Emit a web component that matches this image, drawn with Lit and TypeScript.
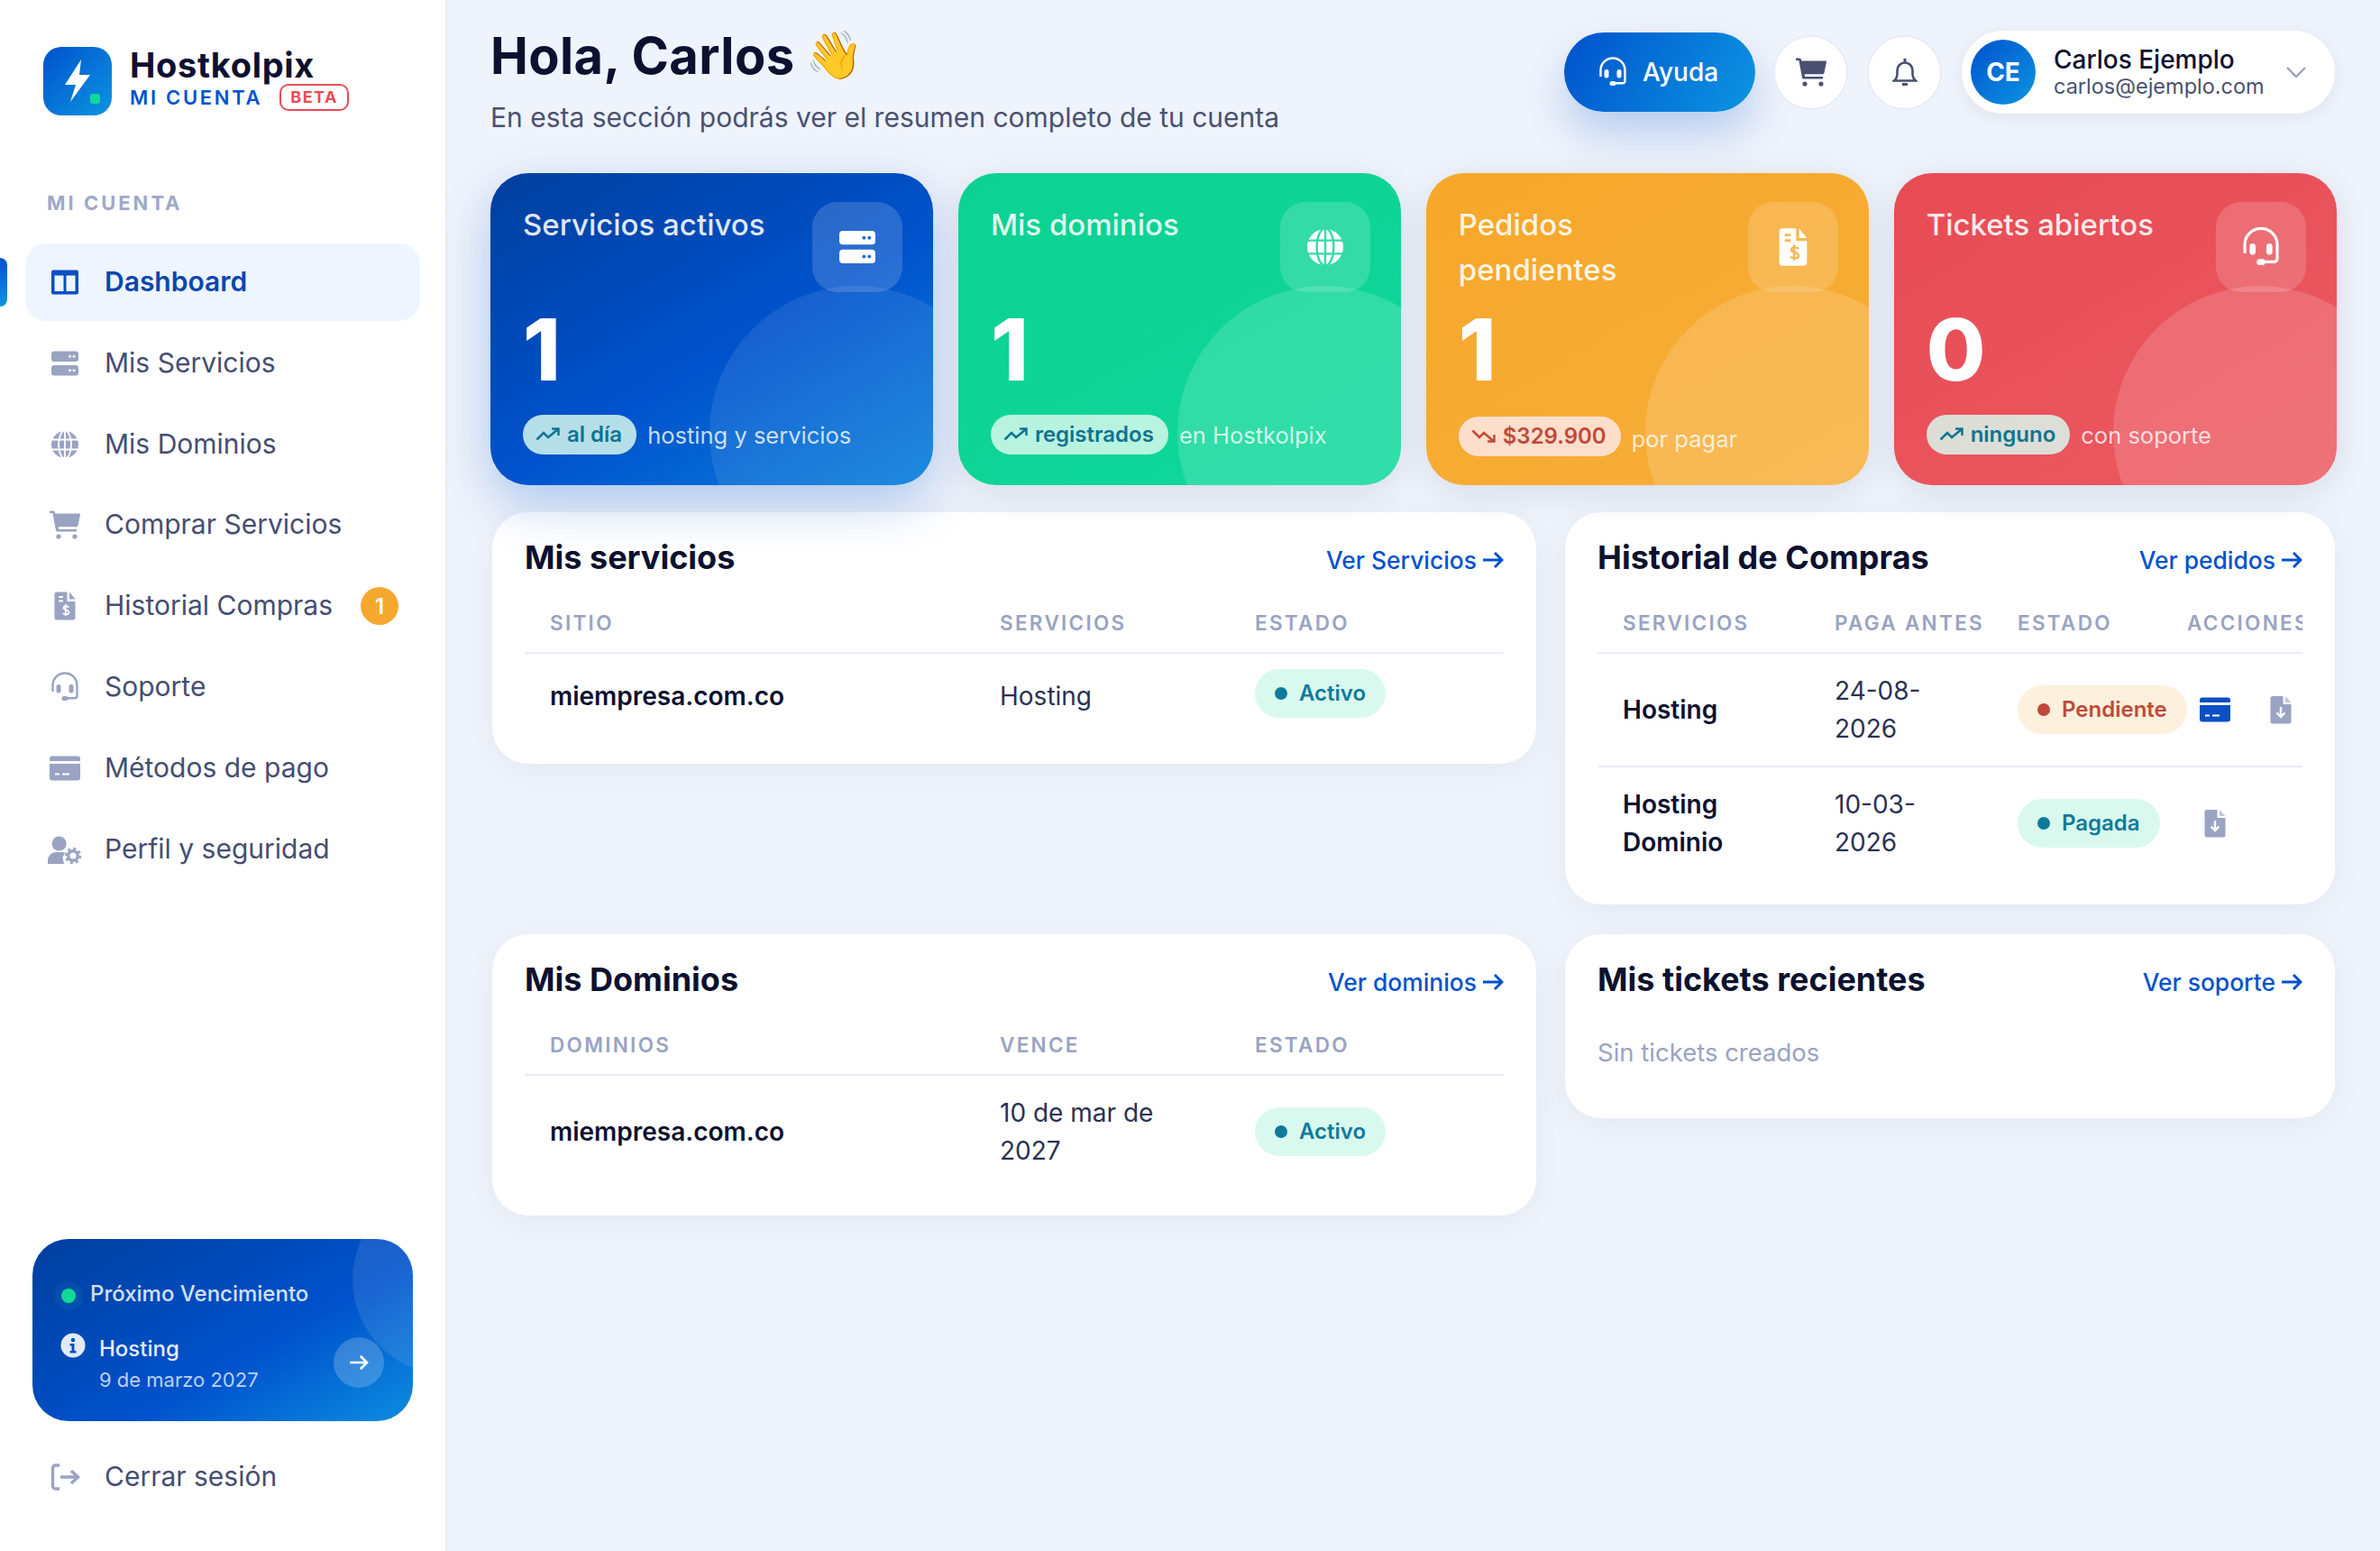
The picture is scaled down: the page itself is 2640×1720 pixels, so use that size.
import { LitElement, html, css, svg } from "lit";
import { customElement } from "lit/decorators.js";

const I: Record<string, any> = {
  dash: svg`<path fill-rule="evenodd" d="M5 4.500h26a2 2 0 0 1 2 2v23a2 2 0 0 1-2 2H5a2 2 0 0 1-2-2v-23a2 2 0 0 1 2-2zM6.500 10.500v17.500h10V10.500zM19.500 10.500v17.500h10V10.500z"/>`,
  server: svg`<path fill-rule="evenodd" d="M6 4.500h24a3 3 0 0 1 3 3v5.500a3 3 0 0 1-3 3H6a3 3 0 0 1-3-3V7.500a3 3 0 0 1 3-3zM6 20h24a3 3 0 0 1 3 3v5.500a3 3 0 0 1-3 3H6a3 3 0 0 1-3-3V23a3 3 0 0 1 3-3zM23.500 8.800a1.500 1.500 0 1 0 .01 0zM28 8.800a1.500 1.500 0 1 0 .01 0zM23.500 24.300a1.500 1.500 0 1 0 .01 0zM28 24.300a1.500 1.500 0 1 0 .01 0z"/>`,
  globe: svg`<mask id="mg"><rect width="36" height="36" fill="#fff"/><g fill="none" stroke="#000" stroke-width="1.800"><ellipse cx="18" cy="18" rx="7" ry="15.500"/><path d="M18 1v34M1 12.500h34M1 23.500h34"/></g></mask><circle cx="18" cy="18" r="15" mask="url(#mg)"/>`,
  cart: svg`<path d="M1 2.500h4a2 2 0 0 1 2 1.500l.3 1.500H34a1 1 0 0 1 1 1.200l-2.500 12a2 2 0 0 1-2 1.600H10.600l.5 2.700H31v2.600H9.500a1.500 1.500 0 0 1-1.400-1.200L4.400 5H1z"/><circle cx="11" cy="31" r="2.600"/><circle cx="29" cy="31" r="2.600"/>`,
  doc: svg`<mask id="md"><rect width="36" height="36" fill="#fff"/><g fill="none" stroke="#000" stroke-width="2"><path d="M11 8h5M11 12.500h5"/><path d="M22.500 19.500c-1-1.500-5.500-2-6 .5-.5 3 6.500 2 6 5.500-.5 2.500-5.500 2-6.500.5M18.800 16v13" stroke-width="1.800"/></g></mask><path mask="url(#md)" d="M9 2.500h11.500v10.500h9V31a2.500 2.500 0 0 1-2.500 2.500H9A2.500 2.500 0 0 1 6.500 31V5A2.500 2.500 0 0 1 9 2.500z"/><path d="M23 2.500l6.500 8H23z"/>`,
  docdown: svg`<mask id="mdd"><rect width="36" height="36" fill="#fff"/><path d="M18 15v11M13.500 21.500l4.500 4.500 4.500-4.500" fill="none" stroke="#000" stroke-width="2.400"/></mask><path mask="url(#mdd)" d="M9 3h11.500v9h9V31a2.500 2.500 0 0 1-2.500 2.500H9A2.500 2.500 0 0 1 6.500 31V5.500A2.500 2.500 0 0 1 9 3z"/><path d="M23 3l6.500 7H23z" opacity=".6"/>`,
  headset: svg`<path d="M4.500 23v-7a13.500 13.500 0 0 1 27 0v11.500a2.800 2.800 0 0 1-2.800 2.800H20" fill="none" stroke="currentColor" stroke-width="2.400"/><rect x="8.500" y="15" width="5" height="9.500" rx="2.500"/><rect x="22.500" y="15" width="5" height="9.500" rx="2.500"/><rect x="14.500" y="28" width="7" height="5" rx="2.500"/>`,
  card: svg`<path fill-rule="evenodd" d="M4 4.500h28a3 3 0 0 1 3 3V10H1V7.500a3 3 0 0 1 3-3zM1 13h34v15.500a3 3 0 0 1-3 3H4a3 3 0 0 1-3-3zM7 23.500v2h5v-2zM15 23.500v2h8v-2z"/>`,
  user: svg`<circle cx="11.600" cy="11.500" r="8"/><path d="M-1 34v-4a9 9 0 0 1 9-9h7.500a9 9 0 0 1 2.500.4L15.500 27l1.500 7z"/><circle cx="27" cy="25" r="5.300" fill="none" stroke="currentColor" stroke-width="3.400"/><circle cx="27" cy="25" r="8" fill="none" stroke="currentColor" stroke-width="2.400" stroke-dasharray="3.200 3.080"/>`,
  logout: svg`<path d="M12 5H7.500a3 3 0 0 0-3 3v20a3 3 0 0 0 3 3H12" fill="none" stroke="currentColor" stroke-width="3.400"/><path d="M13 18h19M25 11l7.500 7-7.500 7" fill="none" stroke="currentColor" stroke-width="3.400"/>`,
};
const ic = (n: string) => html`<svg class="ic" viewBox="0 0 36 36" fill="currentColor">${I[n]}</svg>`;
const trend = (down = false) => html`<svg class="trend" viewBox="0 0 27 15" fill="none" stroke="currentColor" stroke-width="2.500">
  ${down ? svg`<path d="M1.500 1.500L9 9l5-5 11 9.500M18 13.500h7.500V6"/>` : svg`<path d="M1.500 13.500L9 6l5 5L25 2M18 1.500h7.500V9"/>`}</svg>`;
const arrow = html`<svg class="arr" viewBox="0 0 24 20" fill="none" stroke="currentColor" stroke-width="3"><path d="M1 10h21M14 2l8 8-8 8"/></svg>`;

const nav = [
  ["dash", "Dashboard"], ["server", "Mis Servicios"], ["globe", "Mis Dominios"], ["cart", "Comprar Servicios"],
  ["doc", "Historial Compras"], ["headset", "Soporte"], ["card", "Métodos de pago"], ["user", "Perfil y seguridad"],
];
const stats = [
  { c: "blue", t: "Servicios activos", i: "server", n: "1", p: "al día", s: "hosting y servicios" },
  { c: "green", t: "Mis dominios", i: "globe", n: "1", p: "registrados", s: "en Hostkolpix" },
  { c: "orange", t: "Pedidos pendientes", i: "doc", n: "1", p: "$329.900", s: "por pagar", d: true },
  { c: "red", t: "Tickets abiertos", i: "headset", n: "0", p: "ninguno", s: "con soporte" },
];

@customElement("app-root")
export class AppRoot extends LitElement {
  static styles = css`
    :host { display: flex; width: 2640px; height: 1720px; overflow: hidden; background: #eff3fb; font-family: Inter, "Liberation Sans", sans-serif; color: #0c1130; }
    * { box-sizing: border-box; }
    .ic { width: 36px; height: 36px; overflow: visible; flex: none; display: block; }
    .trend { width: 27px; height: 15px; flex: none; }
    .arr { width: 24px; height: 20px; flex: none; }
    aside { width: 496px; height: 1720px; background: #fff; border-right: 2px solid #e8ecf7; flex: none; display: flex; flex-direction: column; position: relative; }
    .brand { display: flex; padding: 52px 0 0 48px; gap: 20px; }
    .logo { width: 76px; height: 76px; border-radius: 20px; background: linear-gradient(135deg, #0052cc, #0c95e2); position: relative; flex: none; display: flex; align-items: center; justify-content: center; }
    .logo svg { width: 30px; height: 48px; }
    .logo i { position: absolute; right: 13px; bottom: 13px; width: 11px; height: 11px; border-radius: 3px; background: #10d996; }
    .bname { font-size: 38px; line-height: 40px; font-weight: 700; letter-spacing: .7px; margin-top: 0; color: #0c1130; }
    .bsub { display: flex; align-items: center; margin-top: 0; gap: 19px; height: 32px; }
    .bsub span { font-size: 22px; font-weight: 600; letter-spacing: 2.700px; color: #0052cc; }
    .bsub b { font-size: 18px; font-weight: 700; letter-spacing: 1.500px; color: #e84c55; border: 2px solid #e84c55; border-radius: 10px; padding: 0 10px; height: 30px; line-height: 26px; }
    .sec { font-size: 22px; line-height: 28px; font-weight: 700; letter-spacing: 3px; color: #a0a8c8; margin: 83px 0 31px 52px; }
    nav { display: flex; flex-direction: column; gap: 3.800px; flex: 1; }
    .it { margin: 0 28px; height: 86px; flex: none; border-radius: 24px; display: flex; align-items: center; padding: 0 0 2px 26px; gap: 26px; color: #9aa3c2; position: relative; }
    .it .ic { margin-top: 2px; }
    .it span { color: #454d72; font-size: 30px; font-weight: 400; }
    .it.on { background: #eef5ff; color: #0a4fc4; }
    .it.on span { color: #0a47ae; font-weight: 600; }
    .it.on::before { content: ""; position: absolute; left: -28px; top: 16px; width: 8px; height: 54px; border-radius: 0 8px 8px 0; background: linear-gradient(#0052cc, #0c95e2); }
    .num { position: absolute; right: 24px; top: 22px; width: 42px; height: 42px; border-radius: 50%; background: #f6a82e; color: #fff !important; font-size: 24px !important; font-weight: 600 !important; display: flex; align-items: center; justify-content: center; }
    .promo { margin: 0 36px 19px; height: 202px; border-radius: 40px; background: linear-gradient(150deg, #003f9e 0%, #0052cc 60%, #0c8de0 100%); position: relative; overflow: hidden; padding: 44px 32px 0 31px; color: #fff; flex: none; }
    .promo::before { content: ""; position: absolute; left: 355px; top: -60px; width: 210px; height: 210px; border-radius: 50%; background: rgba(255,255,255,.1); }
    .pl { display: flex; align-items: center; gap: 16px; font-size: 24px; line-height: 34px; font-weight: 500; color: #d3e1f8; position: relative; padding-left: 1px; }
    .pl i { width: 16px; height: 16px; border-radius: 50%; background: #10d996; box-shadow: 0 0 0 8px rgba(16,217,150,.08); flex: none; margin-top: 4px; }
    .pr { display: flex; margin-top: 26px; position: relative; }
    .inf { width: 28px; height: 28px; flex: none; }
    .pt { margin-left: 15px; margin-top: 2px; flex: 1; }
    .pt b { display: block; font-size: 24px; line-height: 32px; font-weight: 500; color: #e6eefb; }
    .pt small { display: block; font-size: 22px; line-height: 36px; font-weight: 400; color: #bcd0f0; }
    .go { width: 56px; height: 56px; border-radius: 50%; background: rgba(255,255,255,.2); display: flex; align-items: center; justify-content: center; margin-top: 5px; flex: none; }
    .go svg { width: 22px; height: 18px; }
    .out { margin-bottom: 39px; }
    main { flex: 1; padding: 34px 48px 0 48px; min-width: 0; }
    header { display: flex; justify-content: space-between; align-items: flex-start; height: 118px; margin-bottom: 40px; }
    h1 { margin: 0; font-size: 56px; line-height: 56px; font-weight: 700; letter-spacing: .4px; color: #0c1130; display: flex; gap: 12px; align-items: center; }
    .wave { font-family: "Noto Color Emoji", sans-serif; font-size: 52px; letter-spacing: 0; }
    .lead { margin: 18px 0 0; font-size: 30px; line-height: 44px; color: #4a5170; }
    .top { display: flex; align-items: center; height: 92px; margin-right: 2px; }
    .help { width: 212px; height: 88px; border-radius: 44px; background: linear-gradient(120deg, #0052cc, #0c95e2); color: #fff; display: flex; align-items: center; padding-left: 36px; gap: 15px; font-size: 28px; font-weight: 500; box-shadow: 0 24px 48px rgba(0,82,204,.24); }
    .rnd { width: 83px; height: 83px; border-radius: 50%; background: #fff; border: 2px solid #e8ecf7; color: #4a5170; display: flex; align-items: center; justify-content: center; }
    .rnd.c { margin-left: 20px; margin-right: 21px; }
    .bell { width: 28px; height: 32px; }
    .user { margin-left: 22px; width: 414px; height: 92px; background: #fff; border-radius: 46px; box-shadow: 0 4px 20px rgba(15,23,60,.07); display: flex; align-items: center; padding-left: 10px; position: relative; }
    .av { width: 72px; height: 72px; border-radius: 50%; background: linear-gradient(135deg, #0052cc, #0c95e2); color: #fff; font-weight: 700; font-size: 28px; display: flex; align-items: center; justify-content: center; flex: none; }
    .un { margin-left: 20px; flex: 1; }
    .un b { display: block; font-size: 28px; font-weight: 500; line-height: 32px; color: #0c1130; }
    .un small { display: block; font-size: 23.500px; line-height: 28px; color: #4a5170; }
    .chev { width: 22px; height: 12px; margin-right: 32px; color: #9aa3c2; flex: none; }
    .stats { display: grid; grid-template-columns: repeat(4, 1fr); gap: 27.500px; position: relative; z-index: 2; margin-bottom: 30px; }
    .st { height: 346px; border-radius: 42px; padding: 32px 34px 0 36px; position: relative; overflow: hidden; color: #fff; }
    .sw { border-radius: 42px; box-shadow: 0 8px 40px rgba(15,23,60,.1); }
    .sw.blue { box-shadow: 0 20px 56px rgba(0,82,204,.28); }
    .st::before { content: ""; position: absolute; width: 326px; height: 326px; border-radius: 50%; top: 125px; right: -78px; background: rgba(255,255,255,.15); }
    .blue .st { background: linear-gradient(150deg, #003f9e 0%, #0052cc 55%, #0a80dc 100%); }
    .blue .st::before { background: rgba(255,255,255,.09); }
    .green .st { background: linear-gradient(150deg, #0dd191, #0ed89b); }
    .orange .st { background: linear-gradient(150deg, #f6a72a, #f7ae3a); }
    .red .st { background: linear-gradient(150deg, #e74b54, #ec5a62); }
    .sh { display: flex; justify-content: space-between; align-items: flex-start; height: 100px; position: relative; }
    .sh p { margin: 0; font-size: 33px; line-height: 50px; font-weight: 500; color: rgba(255,255,255,.88); max-width: 280px; }
    .bx { width: 100px; height: 100px; border-radius: 28px; background: rgba(255,255,255,.16); display: flex; align-items: center; justify-content: center; flex: none; color: #fff; }
    .bx .ic { width: 48px; height: 48px; }
    .n { font-size: 95px; line-height: 92px; font-weight: 800; margin-top: 18px; margin-bottom: -2px; position: relative; color: #fff; }
    .f { display: flex; align-items: center; gap: 12px; margin-top: 28px; font-size: 25.500px; color: rgba(255,255,255,.78); position: relative; white-space: nowrap; }
    .pill { height: 44px; border-radius: 22px; background: rgba(217,249,238,.84); color: #0e7490; display: flex; align-items: center; gap: 8px; padding: 0 16px 2px 14px; font-size: 24px; font-weight: 600; }
    .orange .f { padding-top: 2px; }
    .orange .pill { background: rgba(254,228,220,.9); color: #c0493a; }
    .orange .f span:last-child { padding-top: 4px; }
    .grid { display: grid; grid-template-columns: 1158px 854px; column-gap: 32px; row-gap: 33px; align-items: start; margin-left: 2px; }
    .pn { background: #fff; border-radius: 40px; padding: 28px 36px 28px; box-shadow: 0 8px 40px rgba(15,23,60,.05); }
    .ph { display: flex; justify-content: space-between; align-items: center; height: 44px; }
    h2 { margin: 0; font-size: 36px; font-weight: 700; color: #0c1130; }
    .lk { font-size: 26.400px; font-weight: 500; color: #0052cc; display: flex; align-items: center; gap: 6px; margin-top: 6px; }
    .tw { overflow: hidden; margin-top: 17px; }
    .r { display: grid; align-items: center; }
    .g1 { grid-template-columns: 499px 283px 1fr; }
    .g2 { grid-template-columns: 235px 203px 216px 200px; width: 854px; }
    .r > div { padding-left: 28px; }
    .g2 > div:nth-child(4) { padding-left: 0; }
    .hd { height: 68px; border-bottom: 2px solid #e8ecf7; font-size: 22.500px; font-weight: 600; letter-spacing: 2.300px; color: #9aa3c2; white-space: nowrap; }
    .bd { padding: 20px 0; font-size: 28px; line-height: 42px; color: #2b3154; }
    .bd.ln { border-bottom: 2px solid #e8ecf7; }
    .bd.x { padding-bottom: 23px; }
    .bd b { font-weight: 600; color: #0c1130; }
    .bg { display: inline-flex; align-items: center; gap: 13px; height: 54px; border-radius: 27px; padding: 0 22px; font-size: 24px; font-weight: 600; background: #d9f9ee; color: #0f7a9c; white-space: nowrap; vertical-align: middle; }
    .bg i { width: 14px; height: 14px; border-radius: 50%; background: currentColor; }
    .bg.p { background: #fdf1de; color: #c0493a; }
    .bg.up { transform: translateY(-3px); }
    .acts { display: flex; gap: 11px; }
    .acts span { width: 62px; display: flex; justify-content: center; color: #9aa3c2; }
    .acts span.b { color: #0a4fc4; }
    .none { margin: 39px 0 0; font-size: 27.500px; line-height: 40px; color: #9aa3c2; padding-bottom: 25px; }
  `;

  private badge(t: string, cls = "") {
    return html`<span class="bg ${cls}"><i></i>${t}</span>`;
  }

  render() {
    return html`
      <aside>
        <div class="brand">
          <div class="logo"><svg viewBox="0 0 30 48" fill="#fff"><path d="M19 0L1 28h12L7 47l22-30H17z"/></svg><i></i></div>
          <div>
            <div class="bname">Hostkolpix</div>
            <div class="bsub"><span>MI CUENTA</span><b>BETA</b></div>
          </div>
        </div>
        <div class="sec">MI CUENTA</div>
        <nav>
          ${nav.map(([i, t], k) => html`<div class="it ${k === 0 ? "on" : ""}">${ic(i)}<span>${t}</span>${k === 4 ? html`<span class="num">1</span>` : ""}</div>`)}
        </nav>
        <div class="promo">
          <div class="pl"><i></i>Próximo Vencimiento</div>
          <div class="pr">
            <svg class="inf" viewBox="0 0 28 28"><circle cx="14" cy="14" r="13.500" fill="#e2eaf6"/><circle cx="14" cy="8" r="2.300" fill="#0a4fc4"/><path d="M10.500 12h5v8h2v2.500h-7V20h2v-5.500h-2z" fill="#0a4fc4"/></svg>
            <div class="pt"><b>Hosting</b><small>9 de marzo 2027</small></div>
            <div class="go">${arrow}</div>
          </div>
        </div>
        <div class="it out">${ic("logout")}<span>Cerrar sesión</span></div>
      </aside>
      <main>
        <header>
          <div>
            <h1>Hola, Carlos <span class="wave">👋</span></h1>
            <p class="lead">En esta sección podrás ver el resumen completo de tu cuenta</p>
          </div>
          <div class="top">
            <div class="help">${ic("headset")}Ayuda</div>
            <div class="rnd c">${ic("cart")}</div>
            <div class="rnd"><svg class="bell" viewBox="0 0 28 32" fill="none" stroke="currentColor" stroke-width="2.600"><path d="M2 25.500c2.500-2 3.500-4 3.500-8v-3.500a8.500 8.500 0 0 1 17 0v3.500c0 4 1 6 3.500 8z"/><path d="M14 1v4M11 29.500h6" stroke-width="3"/></svg></div>
            <div class="user">
              <div class="av">CE</div>
              <div class="un"><b>Carlos Ejemplo</b><small>carlos@ejemplo.com</small></div>
              <svg class="chev" viewBox="0 0 22 12" fill="none" stroke="currentColor" stroke-width="2.400"><path d="M1 1l10 10L21 1"/></svg>
            </div>
          </div>
        </header>
        <section class="stats">
          ${stats.map((s) => html`<div class="sw ${s.c}"><div class="st">
            <div class="sh"><p>${s.t}</p><div class="bx">${ic(s.i)}</div></div>
            <div class="n">${s.n}</div>
            <div class="f"><span class="pill">${trend(s.d)}${s.p}</span><span>${s.s}</span></div>
          </div></div>`)}
        </section>
        <section class="grid">
          <div class="pn">
            <div class="ph"><h2>Mis servicios</h2><span class="lk">Ver Servicios ${arrow}</span></div>
            <div class="tw">
              <div class="r g1 hd"><div>SITIO</div><div>SERVICIOS</div><div>ESTADO</div></div>
              <div class="r g1 bd"><div><b>miempresa.com.co</b></div><div>Hosting</div><div>${this.badge("Activo", "up")}</div></div>
            </div>
          </div>
          <div class="pn">
            <div class="ph"><h2>Historial de Compras</h2><span class="lk">Ver pedidos ${arrow}</span></div>
            <div class="tw">
              <div class="r g2 hd"><div>SERVICIOS</div><div>PAGA ANTES</div><div>ESTADO</div><div>ACCIONES</div></div>
              <div class="r g2 bd ln"><div><b>Hosting</b></div><div>24-08-<br />2026</div><div>${this.badge("Pendiente", "p")}</div><div class="acts"><span class="b">${ic("card")}</span><span>${ic("docdown")}</span></div></div>
              <div class="r g2 bd"><div><b>Hosting<br />Dominio</b></div><div>10-03-<br />2026</div><div>${this.badge("Pagada")}</div><div class="acts"><span>${ic("docdown")}</span></div></div>
            </div>
          </div>
          <div class="pn">
            <div class="ph"><h2>Mis Dominios</h2><span class="lk">Ver dominios ${arrow}</span></div>
            <div class="tw">
              <div class="r g1 hd"><div>DOMINIOS</div><div>VENCE</div><div>ESTADO</div></div>
              <div class="r g1 bd x"><div><b>miempresa.com.co</b></div><div>10 de mar de<br />2027</div><div>${this.badge("Activo")}</div></div>
            </div>
          </div>
          <div class="pn">
            <div class="ph"><h2>Mis tickets recientes</h2><span class="lk">Ver soporte ${arrow}</span></div>
            <p class="none">Sin tickets creados</p>
          </div>
        </section>
      </main>
    `;
  }
}
